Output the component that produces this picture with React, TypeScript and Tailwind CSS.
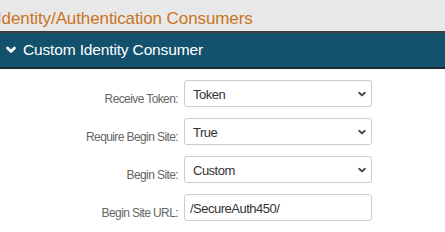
import React from "react";

const Chevron = ({ className, sw = 2.2, d = "M2 3.5 L5 6.5 L8 3.5" }: { className?: string; sw?: number; d?: string }) => (
  <svg viewBox="0 0 10 10" className={className} fill="none" stroke="currentColor" strokeWidth={sw} strokeLinecap="round" strokeLinejoin="round">
    <path d={d} />
  </svg>
);

const SelectBox = ({ value }: { value: string }) => (
  <div className="flex h-[27px] w-[188px] items-center justify-between rounded-[3px] border border-[#cccccc] bg-white pl-[8px] pr-[4px] text-[13px] tracking-[-0.5px] text-[#333333]">
    <span className="pt-[2px]">{value}</span>
    <Chevron className="h-[10px] w-[10px] text-[#444444]" sw={1.9} d="M2.2 3.8 L5 6.4 L7.8 3.8" />
  </div>
);

const InputBox = ({ value }: { value: string }) => (
  <div className="flex h-[27px] w-[188px] items-center rounded-[3px] border border-[#cccccc] bg-white pl-[5px] text-[13px] tracking-[-0.5px] text-[#333333]">
    <span className="pt-[2px]">{value}</span>
  </div>
);

const Row = ({ label, children }: { label: string; children: React.ReactNode }) => (
  <div className="flex items-start">
    <div className="w-[178px] pt-[12px] text-right text-[12px] leading-[14px] tracking-[-0.6px] text-[#666666]">{label}</div>
    <div className="ml-[6px]">{children}</div>
  </div>
);

export default function App() {
  return (
    <div className="h-[232px] w-[445px] overflow-hidden bg-white" style={{ fontFamily: '"Liberation Sans", Arial, sans-serif' }}>
      <div className="h-[31px] overflow-hidden bg-[#e8e8e8] pt-[10px]">
        <div className="-ml-[3px] whitespace-nowrap text-[17px] leading-[18px] tracking-[-0.1px] text-[#c8741e]">Identity/Authentication Consumers</div>
      </div>
      <div className="h-[2px] bg-[#3d3d3d]" />
      <div className="flex h-[34px] items-center bg-[#13526d] pl-[6px] text-white">
        <Chevron className="h-[10px] w-[10px]" sw={2.6} d="M1.5 3 L5 6.5 L8.5 3" />
        <span className="ml-[7px] text-[15.5px] tracking-[-0.15px]">Custom Identity Consumer</span>
      </div>
      <div className="h-[2px] bg-[#1b2a31]" />
      <div className="flex flex-col gap-[11px] pt-[11px]">
        <Row label="Receive Token:">
          <SelectBox value="Token" />
        </Row>
        <Row label="Require Begin Site:">
          <SelectBox value="True" />
        </Row>
        <Row label="Begin Site:">
          <SelectBox value="Custom" />
        </Row>
        <Row label="Begin Site URL:">
          <InputBox value="/SecureAuth450/" />
        </Row>
      </div>
    </div>
  );
}
